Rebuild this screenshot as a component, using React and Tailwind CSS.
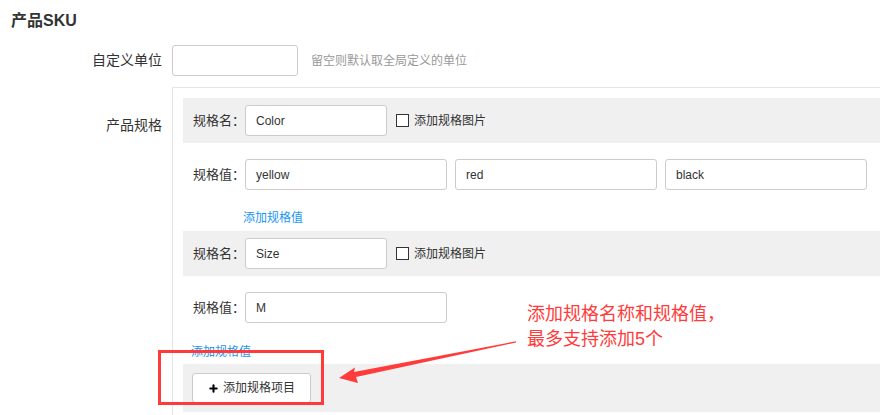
import { Plus } from "lucide-react"

const FONT = "font-['Liberation_Sans','Noto_Sans_CJK_SC',sans-serif]"

function TextInput({ value = "", className = "" }) {
    return (
        <div className={`h-[31px] border border-[#ccc] rounded-[3px] bg-white flex items-center pl-[10px] text-[12px] text-[#333] ${className}`}>
            {value}
        </div>
    )
}

function SpecName({ name }) {
    return (
        <div className="h-[45px] bg-[#f0f0f0] flex items-center pl-[10px]">
            <span className="w-[52px] text-[13px] text-[#333]">规格名：</span>
            <TextInput value={name} className="w-[142px]" />
            <span className="ml-[9px] w-[13px] h-[13px] border border-[#333] bg-white" />
            <span className="ml-[5px] text-[12px] text-[#333]">添加规格图片</span>
        </div>
    )
}

function SpecValues({ values }) {
    return (
        <div className="flex items-center pl-[10px]">
            <span className="w-[52px] text-[13px] text-[#333]">规格值：</span>
            <div className="flex gap-[8px]">
                {values.map(v => (
                    <TextInput key={v} value={v} className="w-[202px]" />
                ))}
            </div>
        </div>
    )
}

export default function App() {
    return (
        <div className={`relative w-[880px] h-[415px] overflow-hidden bg-white ${FONT}`}>
            <div className="pt-[11px] pl-[11px] text-[16px] leading-[20px] font-bold text-[#333]">产品SKU</div>

            {/* 自定义单位 */}
            <div className="mt-[14px] flex items-center">
                <div className="w-[162px] text-right text-[14px] text-[#333]">自定义单位</div>
                <TextInput className="ml-[10px] w-[126px]" />
                <span className="ml-[13px] text-[12px] text-[#999]">留空则默认取全局定义的单位</span>
            </div>

            {/* 产品规格 */}
            <div className="mt-[11px] flex">
                <div className="w-[162px] pt-[28px] text-right text-[14px] text-[#333]">产品规格</div>
                <div className="ml-[10px] flex-1 border-l border-t border-[#e5e5e5] pl-[10px] pt-[10px] pb-[10px]">
                    <SpecName name="Color" />
                    <div className="mt-[16px]">
                        <SpecValues values={["yellow", "red", "black"]} />
                    </div>
                    <div className="mt-[20px] pl-[60px] text-[12px] leading-[16px] text-[#2196f3]">添加规格值</div>
                    <div className="mt-[5px]">
                        <SpecName name="Size" />
                    </div>
                    <div className="mt-[16px]">
                        <SpecValues values={["M"]} />
                    </div>
                    <div className="mt-[21px] pl-[8px] text-[12px] leading-[16px] text-[#2196f3]">添加规格值</div>
                    <div className="mt-[4px] h-[48px] bg-[#f0f0f0] pl-[9px] pt-[9px]">
                        <button className="w-[119px] h-[30px] border border-[#ccc] rounded-[3px] bg-white flex items-center justify-center gap-[4px] text-[12px] text-[#333]">
                            <Plus size={11} strokeWidth={4.5} className="text-black" />
                            添加规格项目
                        </button>
                    </div>
                </div>
            </div>

            {/* annotation overlay */}
            <div className="absolute left-[158px] top-[350px] w-[166px] h-[55px] border-[3px] border-[#ff3a3a]" />
            <div className="absolute left-[527px] top-[302px] text-[18px] leading-[25px] text-[#ff3b3b]">
                <div>添加规格名称和规格值，</div>
                <div>最多支持添加5个</div>
            </div>
            <svg className="absolute left-0 top-0" width="880" height="415" viewBox="0 0 880 415">
                <polygon
                    points="516,341.3 516,342.4 356,377 358,383 339,378 355,367.5 354,372"
                    fill="#ff3b3b"
                />
            </svg>
        </div>
    )
}
